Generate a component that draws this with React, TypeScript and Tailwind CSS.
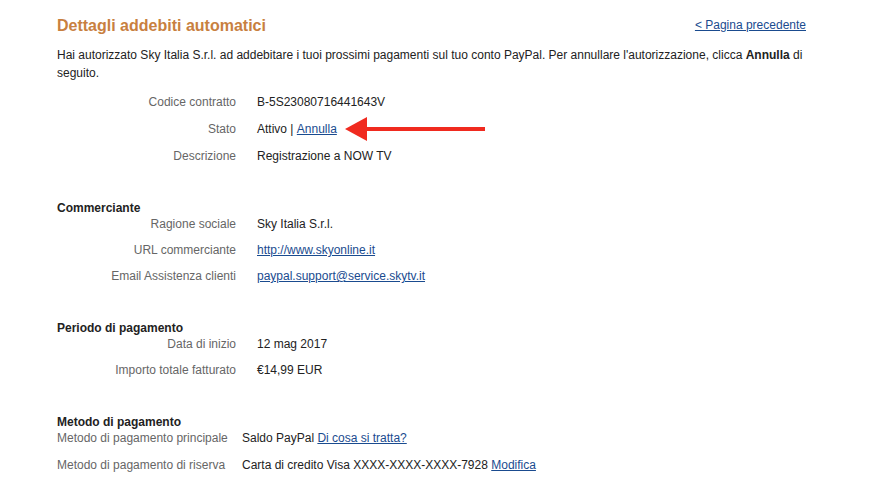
import React from 'react';

const link = 'text-[#1a4b8f] underline';

function Row({ label, children, labelW = 'w-[179px]', gap = 'ml-[21px]', className = '' }: { label: string; children: React.ReactNode; labelW?: string; gap?: string; className?: string }) {
    return (
        <div className={`flex items-center h-4 ${className}`}>
            <div className={`${labelW} text-right text-[#666666] shrink-0 whitespace-nowrap`}>{label}</div>
            <div className={`${gap} flex items-center text-[#222222] whitespace-nowrap`}>{children}</div>
        </div>
    );
}

function Heading({ children }: { children: React.ReactNode }) {
    return <div className='mt-[36px] h-4 leading-4 font-bold text-[#222222]'>{children}</div>;
}

export default function App() {
    return (
        <div
            className='w-full h-[493px] bg-white pl-[57px] pr-[64px] pt-[16px] text-[12px] leading-4'
            style={{ fontFamily: '"Liberation Sans", Arial, sans-serif' }}
        >
            {/* header */}
            <div className='flex justify-between items-center h-[18px]'>
                <h1 className='text-[16px] font-bold text-[#c8803f] leading-[18px] mt-[1px]'>Dettagli addebiti automatici</h1>
                <a className={link} href='#'>&lt; Pagina precedente</a>
            </div>

            <p className='mt-[12px] leading-[18px] text-[#222222]'>
                Hai autorizzato Sky Italia S.r.l. ad addebitare i tuoi prossimi pagamenti sul tuo conto PayPal. Per annullare l'autorizzazione, clicca <b>Annulla</b> di seguito.
            </p>

            {/* contratto */}
            <div className='mt-[12px] flex flex-col gap-[11px]'>
                <Row label='Codice contratto'>B-5S23080716441643V</Row>
                <Row label='Stato'>
                    <span>Attivo |&nbsp;</span>
                    <a className={link} href='#'>Annulla</a>
                    <svg width='141' height='24' viewBox='0 0 141 24' className='ml-[8px] shrink-0'>
                        <polygon points='0,12 22,0 22,24' fill='#f02a1f' />
                        <rect x='21' y='10' width='119' height='4' fill='#f02a1f' />
                    </svg>
                </Row>
                <Row label='Descrizione'>Registrazione a NOW TV</Row>
            </div>

            {/* commerciante */}
            <Heading>Commerciante</Heading>
            <div className='flex flex-col gap-[10px]'>
                <Row label='Ragione sociale'>Sky Italia S.r.l.</Row>
                <Row label='URL commerciante'><a className={link} href='#'>http://www.skyonline.it</a></Row>
                <Row label='Email Assistenza clienti'><a className={link} href='#'>paypal.support@service.skytv.it</a></Row>
            </div>

            {/* periodo */}
            <Heading>Periodo di pagamento</Heading>
            <div className='flex flex-col gap-[10px]'>
                <Row label='Data di inizio'>12 mag 2017</Row>
                <Row label='Importo totale fatturato'>€14,99 EUR</Row>
            </div>

            {/* metodo */}
            <Heading>Metodo di pagamento</Heading>
            <div className='flex flex-col gap-[11px]'>
                <Row label='Metodo di pagamento principale' labelW='w-[166px]' gap='ml-[19px]'>
                    Saldo PayPal&nbsp;<a className={link} href='#'>Di cosa si tratta?</a>
                </Row>
                <Row label='Metodo di pagamento di riserva' labelW='w-[166px]' gap='ml-[19px]'>
                    Carta di credito Visa XXXX-XXXX-XXXX-7928&nbsp;<a className={link} href='#'>Modifica</a>
                </Row>
            </div>
        </div>
    );
}
